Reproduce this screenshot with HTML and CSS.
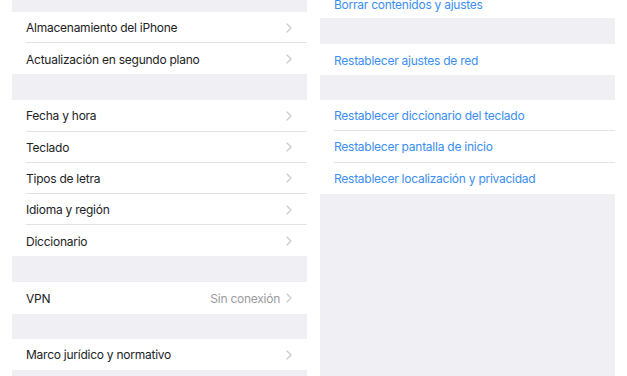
FILE: index.html
```html
<!DOCTYPE html>
<html lang="es">
<head>
<meta charset="utf-8">
<title>Ajustes</title>
<link rel="stylesheet" href="styles.css">
</head>
<body>
<div class="screen">
  <div class="panel left">
    <div class="gap gap-top"></div>
    <div class="group">
      <div class="row"><span class="label">Almacenamiento del iPhone</span><svg class="chev" viewBox="0 0 6 10"><polyline points="1,1 5,5 1,9"/></svg></div>
      <div class="row"><span class="label">Actualización en segundo plano</span><svg class="chev" viewBox="0 0 6 10"><polyline points="1,1 5,5 1,9"/></svg></div>
    </div>
    <div class="gap"></div>
    <div class="group">
      <div class="row"><span class="label">Fecha y hora</span><svg class="chev" viewBox="0 0 6 10"><polyline points="1,1 5,5 1,9"/></svg></div>
      <div class="row"><span class="label">Teclado</span><svg class="chev" viewBox="0 0 6 10"><polyline points="1,1 5,5 1,9"/></svg></div>
      <div class="row"><span class="label">Tipos de letra</span><svg class="chev" viewBox="0 0 6 10"><polyline points="1,1 5,5 1,9"/></svg></div>
      <div class="row"><span class="label">Idioma y región</span><svg class="chev" viewBox="0 0 6 10"><polyline points="1,1 5,5 1,9"/></svg></div>
      <div class="row"><span class="label">Diccionario</span><svg class="chev" viewBox="0 0 6 10"><polyline points="1,1 5,5 1,9"/></svg></div>
    </div>
    <div class="gap"></div>
    <div class="group">
      <div class="row"><span class="label">VPN</span><span class="value">Sin conexión</span><svg class="chev" viewBox="0 0 6 10"><polyline points="1,1 5,5 1,9"/></svg></div>
    </div>
    <div class="gap gap-small"></div>
    <div class="group">
      <div class="row"><span class="label">Marco jurídico y normativo</span><svg class="chev" viewBox="0 0 6 10"><polyline points="1,1 5,5 1,9"/></svg></div>
    </div>
  </div>
  <div class="panel right">
    <div class="group">
      <div class="row action row-first"><span class="link">Borrar contenidos y ajustes</span></div>
    </div>
    <div class="gap"></div>
    <div class="group">
      <div class="row action"><span class="link">Restablecer ajustes de red</span></div>
    </div>
    <div class="gap gap-small"></div>
    <div class="group">
      <div class="row action"><span class="link">Restablecer diccionario del teclado</span></div>
      <div class="row action"><span class="link">Restablecer pantalla de inicio</span></div>
      <div class="row action"><span class="link">Restablecer localización y privacidad</span></div>
    </div>
  </div>
</div>
</body>
</html>
```
FILE: styles.css
```css
html, body {
  margin: 0;
  padding: 0;
  background: #ffffff;
  height: 100%;
  overflow: hidden;
}

.screen {
  display: flex;
  gap: 13px;
  padding-left: 12px;
  height: 376px;
  font-family: Inter, "Noto Sans", sans-serif;
  font-size: 12px;
  letter-spacing: -0.25px;
  -webkit-font-smoothing: antialiased;
}

.panel {
  width: 295px;
  background: #efeff4;
  display: flex;
  flex-direction: column;
}

.panel.right {
  margin-top: -10px;
  height: 386px;
}

.gap {
  height: 26px;
  flex: none;
}

.gap-top {
  height: 12px;
}

.gap-small {
  height: 25px;
}

.group {
  background: #ffffff;
  flex: none;
}

.row {
  height: 31.2px;
  display: flex;
  align-items: center;
  margin-left: 14px;
  padding-right: 15px;
  padding-top: 1px;
  border-bottom: 1px solid #e3e3e6;
  box-sizing: border-box;
}

.row:last-child {
  border-bottom: none;
}

.row-first {
  height: 28px;
}

.label {
  color: #222224;
  flex: 1;
  white-space: nowrap;
}

.value {
  color: #9a9a9f;
  margin-right: 6px;
}

.chev {
  width: 6px;
  height: 10px;
  flex: none;
  fill: none;
  stroke: #c9c9ce;
  stroke-width: 1.2;
  stroke-linecap: round;
  stroke-linejoin: round;
}

.action {
  padding-right: 0;
}

.link {
  color: #3a8ef2;
  white-space: nowrap;
}
```
